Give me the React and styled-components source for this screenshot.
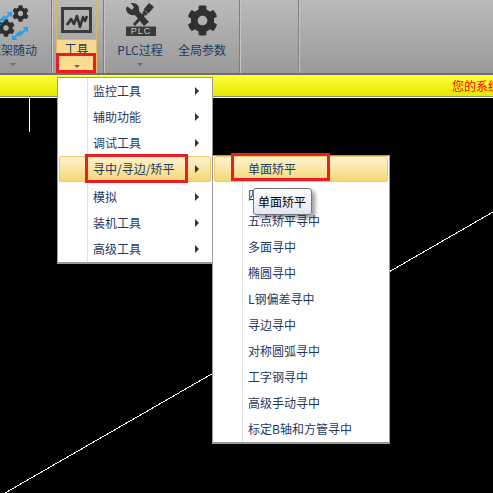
import React from 'react';
import styled, { createGlobalStyle } from 'styled-components';
import { FaCog } from 'react-icons/fa';

const CJK = '"Noto Sans CJK SC", "Liberation Sans", sans-serif';

const GlobalStyle = createGlobalStyle`
  html, body {
    margin: 0;
    padding: 0;
    background: #000;
    overflow: hidden;
  }
  * {
    box-sizing: border-box;
  }
`;

const rootMenu = [
  { label: '监控工具' },
  { label: '辅助功能' },
  { label: '调试工具' },
  { label: '寻中/寻边/矫平', active: true },
  { label: '模拟' },
  { label: '装机工具' },
  { label: '高级工具' }
];

const subMenu = [
  { label: '单面矫平', active: true },
  { label: '四点寻中' },
  { label: '五点矫平寻中' },
  { label: '多面寻中' },
  { label: '椭圆寻中' },
  { label: 'L钢偏差寻中' },
  { label: '寻边寻中' },
  { label: '对称圆弧寻中' },
  { label: '工字钢寻中' },
  { label: '高级手动寻中' },
  { label: '标定B轴和方管寻中' }
];

const Arrow = () => (
  <svg width="11" height="11" viewBox="0 0 11 11">
    <path d="M1 10 L7 4" stroke="#1f9ff2" strokeWidth="2" />
    <path d="M4.5 1 H10 V6.5 Z" fill="#1f9ff2" />
  </svg>
);

const MonitorIcon = () => (
  <svg width="31" height="26" viewBox="0 0 31 26">
    <rect x="1.5" y="1.5" width="28" height="23" fill="none" stroke="#3b3b3b" strokeWidth="3" />
    <path
      d="M6 18 L10 12 L13 17 L16 9 L19 20 L22 10 L24 14 L26 9"
      fill="none"
      stroke="#333"
      strokeWidth="2.6"
      strokeLinejoin="round"
    />
  </svg>
);

const PlcIcon = () => (
  <svg width="32" height="28" viewBox="0 0 32 28">
    <path
      d="M2 8 C2 13 6 16 11 15 L20 26 L25 22 L15 11 C16 6 13 3 8 3 L6.5 3 L10 7 L8 10 L3.5 6.5 Z"
      fill="#333"
    />
    <path d="M10 25 L20 14" stroke="#333" strokeWidth="3" />
    <path d="M20 14 L22 12" stroke="#333" strokeWidth="5" />
    <path d="M22 11.5 L27.5 5" stroke="#333" strokeWidth="6.5" />
  </svg>
);

const App = () => (
  <>
    <GlobalStyle />
    <Page>
      <Ribbon>
        <Group $width={52}>
          <RibbonButton $left={-19}>
            <GearCluster>
              <GearTop>
                <FaCog size={17} color="#2f2f2f" />
              </GearTop>
              <GearBottom>
                <FaCog size={18} color="#2f2f2f" />
              </GearBottom>
              <ArrowA>
                <Arrow />
              </ArrowA>
              <ArrowB>
                <Arrow />
              </ArrowB>
              <ArrowC>
                <Arrow />
              </ArrowC>
              <ArrowD>
                <Arrow />
              </ArrowD>
            </GearCluster>
            <ButtonLabel>框架随动</ButtonLabel>
            <Caret />
          </RibbonButton>
        </Group>
        <Group $width={52}>
          <ToolButton>
            <ToolTop>
              <MonitorIcon />
            </ToolTop>
            <ToolBottom>
              <ButtonLabel $tight>工具</ButtonLabel>
              <CaretBox>
                <Caret />
              </CaretBox>
            </ToolBottom>
          </ToolButton>
        </Group>
        <Group $width={136}>
          <RibbonButton $left={7} $width={58}>
            <IconSlot>
              <PlcIcon />
              <PlcTag>PLC</PlcTag>
            </IconSlot>
            <ButtonLabel>PLC过程</ButtonLabel>
            <Caret />
          </RibbonButton>
          <RibbonButton $left={3} $width={60}>
            <IconSlot $top={5}>
              <FaCog size={31} color="#303030" />
            </IconSlot>
            <ButtonLabel>全局参数</ButtonLabel>
          </RibbonButton>
        </Group>
        <Group $width={59} />
        <Group $width={194} $last />
      </Ribbon>
      <Notice>
        <NoticeText>您的系统</NoticeText>
      </Notice>
      <Canvas>
        <svg width="493" height="396" viewBox="0 0 493 396" shapeRendering="crispEdges">
          <path d="M0 0.5 H493" stroke="#fff" />
          <path d="M29.5 0 V35" stroke="#fff" />
          <path d="M5 396 L493 115" stroke="#fff" />
        </svg>
      </Canvas>

      <RootMenu>
        <Rule />
        {rootMenu.map(item => (
          <MenuRow key={item.label} $active={item.active}>
            <MenuText>{item.label}</MenuText>
            <MenuArrow />
          </MenuRow>
        ))}
      </RootMenu>

      <SubMenu>
        <Rule />
        {subMenu.map(item => (
          <MenuRow key={item.label} $active={item.active}>
            <MenuText>{item.label}</MenuText>
          </MenuRow>
        ))}
      </SubMenu>

      <Tooltip>单面矫平</Tooltip>

      <RedBox $x={56} $y={53} $w={40} $h={20} />
      <RedBox $x={85} $y={154} $w={103} $h={29} />
      <RedBox $x={231} $y={153} $w={99} $h={28} />
    </Page>
  </>
);

export default App;

const Page = styled.div`
  position: relative;
  width: 493px;
  height: 493px;
  overflow: hidden;
  background: #000;
  font-family: ${CJK};
`;

const Ribbon = styled.div`
  display: flex;
  height: 75px;
  padding-bottom: 2px;
  background: linear-gradient(#bababa, #9a9a9a);
  border-bottom: 2px solid #6f6f6f;
`;

const Group = styled.div`
  display: flex;
  flex: none;
  width: ${p => p.$width}px;
  height: 73px;
  border-right: ${p => (p.$last ? 'none' : '1px solid #7f7f7f')};
  box-shadow: ${p => (p.$last ? 'none' : '1px 0 0 #c4c4c4')};
`;

const RibbonButton = styled.div`
  display: flex;
  flex: none;
  flex-direction: column;
  align-items: center;
  width: ${p => p.$width || 64}px;
  height: 73px;
  margin-left: ${p => p.$left}px;
`;

const IconSlot = styled.div`
  position: relative;
  display: flex;
  justify-content: center;
  align-items: flex-start;
  width: 100%;
  height: 40px;
  padding-top: ${p => p.$top || 0}px;
`;

const GearCluster = styled.div`
  position: relative;
  width: 100%;
  height: 40px;
`;

const GearTop = styled.div`
  position: absolute;
  left: 31px;
  top: 3px;
`;

const GearBottom = styled.div`
  position: absolute;
  left: 16px;
  top: 18px;
`;

const ArrowA = styled.div`
  position: absolute;
  left: 21px;
  top: 3px;
`;

const ArrowB = styled.div`
  position: absolute;
  left: 14px;
  top: 10px;
  transform: rotate(180deg);
`;

const ArrowC = styled.div`
  position: absolute;
  left: 37px;
  top: 18px;
`;

const ArrowD = styled.div`
  position: absolute;
  left: 30px;
  top: 25px;
  transform: rotate(180deg);
`;

const PlcTag = styled.div`
  position: absolute;
  left: 15px;
  top: 26px;
  width: 30px;
  height: 10px;
  background: #3a3a3a;
  border-top: 1px solid #777;
  color: #c8c8c8;
  font: 9px/9px 'Liberation Sans', sans-serif;
  letter-spacing: 1px;
  text-align: center;
`;

const ButtonLabel = styled.div`
  margin-top: ${p => (p.$tight ? '0' : '1px')};
  color: #1c3a60;
  font-size: 12px;
  line-height: 17px;
  white-space: nowrap;
`;

const Caret = styled.div`
  width: 0;
  height: 0;
  margin: 5px auto 0;
  border-style: solid;
  border-width: 3px 3px 0;
  border-color: #6a6a6a transparent transparent;
`;

const ToolButton = styled.div`
  display: flex;
  flex-direction: column;
  width: 41px;
  height: 73px;
  margin-left: 4px;
`;

const ToolTop = styled.div`
  display: flex;
  justify-content: center;
  height: 40px;
  padding-top: 7px;
  border: solid #d9b566;
  border-width: 0 1px 1px;
`;

const ToolBottom = styled.div`
  flex: 1;
  text-align: center;
  background: linear-gradient(#f6d98e, #fddf8c);
  border: solid #e3bb63;
  border-width: 0 1px;
`;

const CaretBox = styled.div`
  height: 16px;
  padding-top: 3px;
`;

const Notice = styled.div`
  display: flex;
  justify-content: flex-end;
  align-items: center;
  height: 22px;
  overflow: hidden;
  background: linear-gradient(#ffff3a, #e8e800);
  border-bottom: 1px solid #8c8c70;
`;

const NoticeText = styled.span`
  width: 41px;
  overflow: hidden;
  color: #f00;
  font-size: 12px;
  line-height: 20px;
  white-space: nowrap;
`;

const Canvas = styled.div`
  height: 396px;
  line-height: 0;
  background: #000;
`;

const MenuPanel = styled.div`
  position: absolute;
  display: flex;
  flex-direction: column;
  background: #fff;
  border: 1px solid #9a9a9a;
  border-width: 1px 1px 2px 1px;
`;

const RootMenu = styled(MenuPanel)`
  left: 57px;
  top: 77px;
  width: 156px;
  height: 187px;

  & > div:nth-child(5) {
    margin-bottom: 2px;
  }
`;

const SubMenu = styled(MenuPanel)`
  left: 212px;
  top: 155px;
  width: 178px;
  height: 289px;
`;

const Rule = styled.div`
  position: absolute;
  left: 29px;
  top: 0;
  bottom: 0;
  width: 1px;
  background: #e2e3e4;
`;

const MenuRow = styled.div`
  position: relative;
  display: flex;
  flex: none;
  align-items: center;
  justify-content: space-between;
  height: 26px;
  margin: 0 1px;
  padding: 0 12px 0 34px;
  border-radius: 3px;
  ${p =>
    p.$active &&
    `
    background: linear-gradient(#fdf3cf, #f9e7a9 45%, #f6d670);
    box-shadow: inset 0 0 0 1px #edcb6c;
  `}
`;

const MenuText = styled.span`
  color: #1f3a5f;
  font-size: 12px;
  line-height: 26px;
  white-space: nowrap;
`;

const MenuArrow = styled.span`
  width: 0;
  height: 0;
  border-style: solid;
  border-width: 4px 0 4px 4px;
  border-color: transparent transparent transparent #333;
`;

const Tooltip = styled.div`
  position: absolute;
  left: 253px;
  top: 188px;
  width: 59px;
  height: 27px;
  padding-left: 4px;
  color: #000;
  font-size: 12px;
  line-height: 26px;
  background: linear-gradient(#fff, #e4e5f0);
  border: 1px solid #767676;
  border-radius: 3px;
  box-shadow: 3px 3px 4px rgba(0, 0, 0, 0.4);
`;

const RedBox = styled.div`
  position: absolute;
  left: ${p => p.$x}px;
  top: ${p => p.$y}px;
  width: ${p => p.$w}px;
  height: ${p => p.$h}px;
  border: 3px solid #ec1c24;
`;
